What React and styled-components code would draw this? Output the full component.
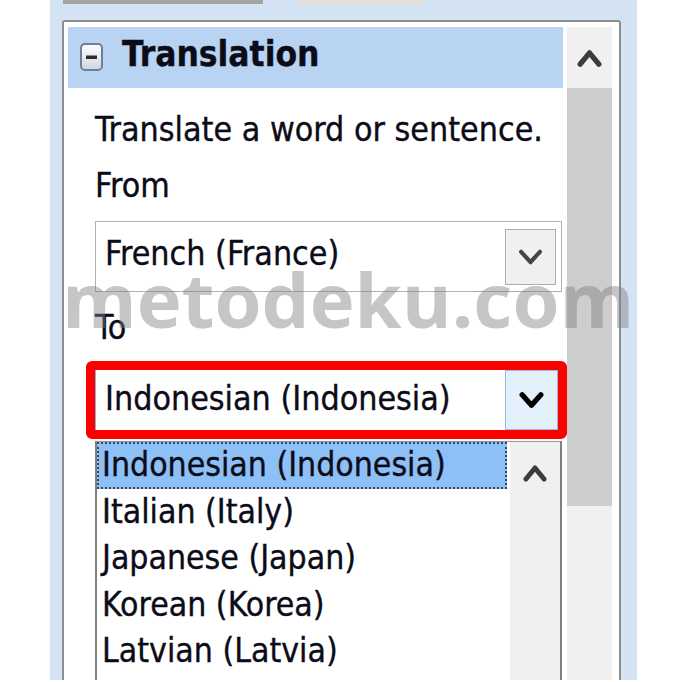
import React from "react";
import styled, { createGlobalStyle } from "styled-components";

const GlobalStyle = createGlobalStyle`
  html, body {
    margin: 0;
    padding: 0;
    background: #ffffff;
  }
  body {
    font-family: "DejaVu Sans Condensed", "DejaVu Sans", sans-serif;
    font-stretch: semi-condensed;
    color: #0c0c18;
    -webkit-text-stroke: 0.35px #0c0c18;
  }
`;

const Frame = styled.div`
  position: relative;
  box-sizing: border-box;
  width: 587px;
  height: 680px;
  margin-left: 50px;
  padding: 0 16px 0 12px;
  background: #d4e3f4;
  display: flex;
  flex-direction: column;
  overflow: hidden;
`;

const TabRow = styled.div`
  height: 20px;
  flex: none;
  display: flex;
  align-items: flex-start;
  gap: 35px;
  padding-left: 1px;
`;

const Tab = styled.div`
  height: 4px;
  width: ${(p) => p.$w}px;
  background: ${(p) => p.$bg};
`;

const Panel = styled.div`
  flex: 1;
  min-height: 0;
  box-sizing: border-box;
  border: 2px solid #8e8e8e;
  border-bottom: none;
  border-radius: 3px 3px 0 0;
  background: #ffffff;
  padding: 5px 7px 0 4px;
  display: grid;
  grid-template-columns: 495px 45px;
  column-gap: 4px;
  overflow: hidden;
`;

const MainColumn = styled.div`
  display: flex;
  flex-direction: column;
  min-height: 0;
`;

const Header = styled.div`
  height: 61px;
  flex: none;
  box-sizing: border-box;
  background: #b9d3f3;
  display: flex;
  align-items: flex-start;
  padding-left: 12px;
`;

const ToggleIcon = styled.svg`
  margin-top: 16px;
  flex: none;
`;

const Title = styled.div`
  margin: 10px 0 0 19px;
  font-weight: 700;
  font-size: 35px;
  line-height: 35px;
  white-space: nowrap;
`;

const Body = styled.div`
  flex: 1;
  min-height: 0;
  display: flex;
  flex-direction: column;
  padding: 14px 1px 0 27px;
`;

const Label = styled.div`
  font-size: 33.7px;
  line-height: 56px;
  white-space: nowrap;
  margin-top: ${(p) => p.$mt || 0}px;
`;

const SelectBox = styled.div`
  position: relative;
  flex: none;
  box-sizing: border-box;
  height: ${(p) => p.$h}px;
  margin-top: ${(p) => p.$mt}px;
  border: 1px solid ${(p) => (p.$active ? "#7eb4ea" : "#aeb0b6")};
  background: #ffffff;
  display: flex;
  align-items: center;
  justify-content: space-between;
`;

const SelectText = styled.span`
  font-size: 33.7px;
  line-height: 1;
  padding-left: 9px;
  padding-bottom: ${(p) => p.$lift}px;
  white-space: nowrap;
`;

const DropButton = styled.div`
  box-sizing: border-box;
  width: ${(p) => (p.$active ? 53 : 51)}px;
  height: ${(p) => (p.$active ? 60 : 56)}px;
  margin-right: ${(p) => (p.$active ? 3 : 5)}px;
  border: 1px solid ${(p) => (p.$active ? "#8cbde8" : "#adadad")};
  background: ${(p) => (p.$active ? "#e4f0fb" : "#f0f0f0")};
  display: flex;
  align-items: center;
  justify-content: center;
`;

const RedMark = styled.div`
  position: absolute;
  top: -5px;
  bottom: -5px;
  left: -10px;
  right: -6px;
  border: 9px solid #ff0000;
  border-radius: 6px;
  pointer-events: none;
`;

const ListBox = styled.div`
  flex: 1;
  margin-top: 6px;
  border-top: 1px solid #9a9a9a;
  border-left: 2px solid #7f7f7f;
  border-right: 2px solid #7f7f7f;
  display: grid;
  grid-template-columns: 1fr 50px;
  overflow: hidden;
`;

const Items = styled.div`
  padding-right: 3px;
`;

const Item = styled.div`
  font-size: 33.5px;
  line-height: 46.5px;
  padding-left: 5px;
  white-space: nowrap;
  background: ${(p) => (p.$selected ? "#8cc0f6" : "transparent")};
  outline: ${(p) => (p.$selected ? "2px dotted #39475a" : "none")};
  outline-offset: -2px;
`;

const ListScroll = styled.div`
  background: #f0f0f0;
  display: flex;
  justify-content: center;
  align-items: flex-start;
  padding-top: 20px;
`;

const ScrollBar = styled.div`
  background: #f0f0f0;
  display: flex;
  flex-direction: column;
`;

const ScrollUp = styled.div`
  height: 61px;
  flex: none;
  display: flex;
  align-items: center;
  justify-content: center;
`;

const Thumb = styled.div`
  height: 418px;
  flex: none;
  background: #cdcdcd;
`;

const Watermark = styled.div`
  position: absolute;
  left: 12px;
  top: 261px;
  font-family: "Open Sans", "Liberation Sans", sans-serif;
  font-stretch: normal;
  font-weight: 700;
  font-size: 76px;
  line-height: 76px;
  color: rgba(128, 128, 128, 0.45);
  -webkit-text-stroke: 0;
  white-space: nowrap;
  pointer-events: none;
`;

const Chevron = ({ up, color, weight, w = 24, h = 20 }) => (
  <svg width={w} height={h} viewBox="0 0 24 20">
    <polyline
      points={up ? "3,16 12,5 21,16" : "3,5 12,15 21,5"}
      fill="none"
      stroke={color}
      strokeWidth={weight}
      strokeLinecap="round"
      strokeLinejoin="round"
    />
  </svg>
);

const MinusBox = () => (
  <ToggleIcon width="23" height="28" viewBox="0 0 23 28">
    <defs>
      <linearGradient id="toggleFill" x1="0" y1="0" x2="0" y2="1">
        <stop offset="0" stopColor="#ffffff" />
        <stop offset="1" stopColor="#cdd6e2" />
      </linearGradient>
    </defs>
    <rect x="1" y="1" width="21" height="26" rx="4" fill="url(#toggleFill)" stroke="#6f7f94" strokeWidth="2" />
    <rect x="6" y="12.5" width="11" height="3.5" fill="#2b2b2b" />
  </ToggleIcon>
);

const languages = [
  "Indonesian (Indonesia)",
  "Italian (Italy)",
  "Japanese (Japan)",
  "Korean (Korea)",
  "Latvian (Latvia)",
  "Lithuanian (Lithuania)",
];

export default function App() {
  return (
    <>
      <GlobalStyle />
      <Frame>
        <TabRow>
          <Tab $w={200} $bg="#a3a3a3" />
          <Tab $w={125} $bg="#e3e0d9" />
        </TabRow>
        <Panel>
          <MainColumn>
            <Header>
              <MinusBox />
              <Title>Translation</Title>
            </Header>
            <Body>
              <Label>Translate a word or sentence.</Label>
              <Label>From</Label>
              <SelectBox $h={71} $mt={7}>
                <SelectText $lift={6}>French (France)</SelectText>
                <DropButton>
                  <Chevron color="#454545" weight={4} w={25} h={22} />
                </DropButton>
              </SelectBox>
              <Label $mt={8}>To</Label>
              <SelectBox $h={70} $mt={9} $active>
                <SelectText $lift={2}>Indonesian (Indonesia)</SelectText>
                <DropButton $active>
                  <Chevron color="#000000" weight={5} w={25} h={22} />
                </DropButton>
                <RedMark />
              </SelectBox>
              <ListBox>
                <Items>
                  {languages.map((lang, i) => (
                    <Item key={lang} $selected={i === 0}>
                      {lang}
                    </Item>
                  ))}
                </Items>
                <ListScroll>
                  <Chevron up color="#3c3c3c" weight={5} w={24} h={22} />
                </ListScroll>
              </ListBox>
            </Body>
          </MainColumn>
          <ScrollBar>
            <ScrollUp>
              <Chevron up color="#3c3c3c" weight={5} w={25} h={22} />
            </ScrollUp>
            <Thumb />
          </ScrollBar>
        </Panel>
        <Watermark>metodeku.com</Watermark>
      </Frame>
    </>
  );
}
